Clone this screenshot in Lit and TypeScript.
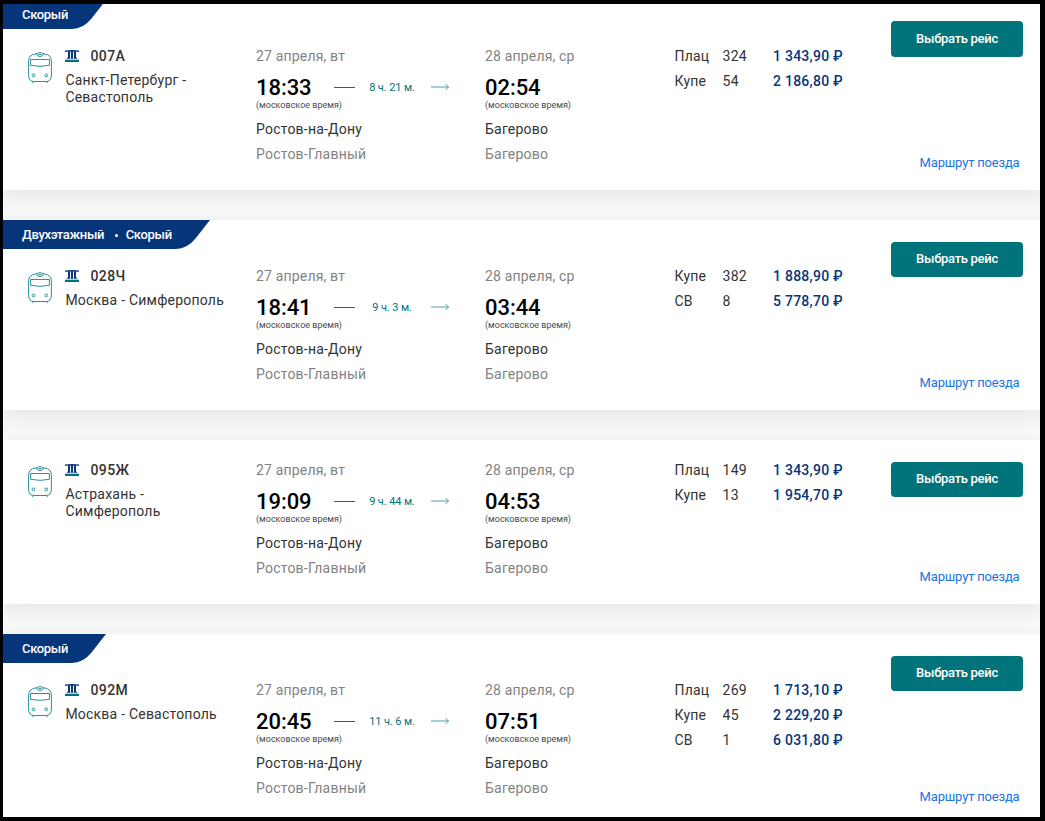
import { LitElement, html, svg, css, nothing } from 'lit';
import { customElement, property } from 'lit/decorators.js';

interface Seat {
  type: string;
  count: number;
  price: string;
}

interface Train {
  tags: string[];
  num: string;
  route: string;
  departure: string;
  arrival: string;
  duration: string;
  seats: Seat[];
}

const trains: Train[] = [
  {
    tags: ['Скорый'],
    num: '007А',
    route: 'Санкт-Петербург - Севастополь',
    departure: '18:33',
    arrival: '02:54',
    duration: '8 ч. 21 м.',
    seats: [
      { type: 'Плац', count: 324, price: '1 343,90 ₽' },
      { type: 'Купе', count: 54, price: '2 186,80 ₽' },
    ],
  },
  {
    tags: ['Двухэтажный', 'Скорый'],
    num: '028Ч',
    route: 'Москва - Симферополь',
    departure: '18:41',
    arrival: '03:44',
    duration: '9 ч. 3 м.',
    seats: [
      { type: 'Купе', count: 382, price: '1 888,90 ₽' },
      { type: 'СВ', count: 8, price: '5 778,70 ₽' },
    ],
  },
  {
    tags: [],
    num: '095Ж',
    route: 'Астрахань - Симферополь',
    departure: '19:09',
    arrival: '04:53',
    duration: '9 ч. 44 м.',
    seats: [
      { type: 'Плац', count: 149, price: '1 343,90 ₽' },
      { type: 'Купе', count: 13, price: '1 954,70 ₽' },
    ],
  },
  {
    tags: ['Скорый'],
    num: '092М',
    route: 'Москва - Севастополь',
    departure: '20:45',
    arrival: '07:51',
    duration: '11 ч. 6 м.',
    seats: [
      { type: 'Плац', count: 269, price: '1 713,10 ₽' },
      { type: 'Купе', count: 45, price: '2 229,20 ₽' },
      { type: 'СВ', count: 1, price: '6 031,80 ₽' },
    ],
  },
];

const trainIcon = html`
  <svg width="24" height="31" viewBox="0 0 24 31" fill="none" stroke="#2a9099" stroke-width="1">
    ${svg`
      <path d="M9 1.7Q4 2 2 4.5Q.6 6.5 .6 10V23Q.6 29.5 6 29.5H18Q23.4 29.5 23.4 23V10Q23.4 6.5 22 4.5Q20 2 15 1.7" />
      <path d="M2.6 7.5H21.4V13.3Q12 15.4 2.6 13.3Z" />
      <path d="M8.5 2.2Q9.5 .7 12 .7T15.5 2.2Q14.5 4.5 12 4.5T8.5 2.2Z" />
      <path d="M10.5 2.5H13.5" />
      <circle cx="5.5" cy="23.4" r="1.4" />
      <circle cx="18.3" cy="23.4" r="1.4" />
      <path d="M5.8 29.3L4.3 31M18.2 29.3L19.7 31" />
    `}
  </svg>
`;

const carrierIcon = html`
  <svg class="carrier" width="14" height="12" viewBox="0 0 14 12">
    ${svg`
      <path fill="#06357a" d="M0 .5Q7-.5 14 .5V1.8H0Z" />
      <path fill="#06357a" d="M3 1.5H5V8H5.4V8.8H1.8V8.2Q3 8 3 7Z" />
      <path fill="#06357a" d="M6 1.5H8V8.8H6Z" />
      <path fill="#06357a" d="M11 1.5H9V8H8.6V8.8H12.2V8.2Q11 8 11 7Z" />
      <path fill="#00747a" d="M0 9.7H14V12H0Z" />
    `}
  </svg>
`;

@customElement('train-card')
export class TrainCard extends LitElement {
  @property({ attribute: false }) train!: Train;

  static styles = [
    css`
      :host {
        display: block;
        background-color: white;
        box-shadow: 0 6px 18px rgba(0, 0, 0, 0.07);
      }
      svg {
        display: block;
        flex: none;
      }
      .card {
        display: flex;
        justify-content: space-between;
        min-height: 164px;
      }
      .card.tagged {
        min-height: 190px;
      }
      .ribbon {
        display: flex;
        height: 29px;
      }
      .tags {
        display: flex;
        align-items: center;
        background-color: #06357a;
        color: white;
        font-size: 13px;
        font-weight: 500;
        letter-spacing: -0.32px;
        padding-left: 19px;
      }
      .dot {
        width: 3px;
        height: 3px;
        border-radius: 50%;
        background-color: white;
        margin: 1px 8px 0 10.5px;
      }
      .body {
        display: grid;
        grid-template-columns: 37px 191px 229px 189.5px 180px;
        padding: 18px 0 0 25px;
      }
      .tagged .body {
        padding-top: 15px;
      }
      .train-icon {
        padding-top: 8px;
      }
      .carrier {
        margin-bottom: 1px;
      }
      .number {
        display: flex;
        align-items: center;
        gap: 11.5px;
        line-height: 25px;
        font-weight: 500;
        letter-spacing: 0.4px;
      }
      .route {
        width: 165px;
        line-height: 17px;
        margin-top: 3px;
        padding-left: 0.4px;
      }
      .date,
      .station {
        color: #828282;
        line-height: 25px;
      }
      .date {
        letter-spacing: 0.17px;
      }
      .time-row {
        display: flex;
        align-items: center;
        height: 24px;
        margin-top: 6px;
      }
      .time {
        width: 78px;
        color: black;
        font-size: 22px;
        font-weight: 500;
        letter-spacing: -0.05px;
      }
      .duration {
        display: flex;
        align-items: center;
        justify-content: space-between;
        width: 115px;
        color: #00747a;
        font-size: 11px;
        letter-spacing: -0.1px;
      }
      .label {
        margin-right: 2px;
      }
      .dash {
        width: 21px;
        height: 1px;
        background-color: #00747a;
      }
      .note {
        color: #4a4a4a;
        font-size: 9px;
        line-height: 12px;
        letter-spacing: 0;
      }
      .city {
        line-height: 25px;
        margin-top: 6px;
      }
      .seat {
        display: grid;
        grid-template-columns: 48px 50.5px auto;
        line-height: 25px;
      }
      .count {
        letter-spacing: 0.3px;
      }
      .price {
        color: #06357a;
        font-weight: 500;
        letter-spacing: 0.25px;
        white-space: nowrap;
      }
      .actions {
        display: flex;
        flex-direction: column;
        justify-content: space-between;
        align-items: flex-end;
        padding: 22px 17px 18px 0;
      }
      .actions button {
        width: 132px;
        height: 35px;
        padding: 0 0 2px;
        border: none;
        border-radius: 4px;
        background-color: #00747a;
        color: white;
        font: 500 13px Roboto, sans-serif;
        letter-spacing: -0.3px;
        cursor: pointer;
      }
      :host(:first-child) .actions {
        padding-top: 21px;
      }
      :host(:first-child) button {
        height: 36px;
      }
      .actions a {
        color: #1a73e0;
        font-size: 13px;
        line-height: 18px;
        letter-spacing: -0.18px;
        margin-right: 3.5px;
        text-decoration: none;
      }
    `,
  ];

  renderRibbon() {
    const { tags } = this.train;
    if (!tags.length) return nothing;
    return html`
      <div class="ribbon">
        <div class="tags">
          ${tags.map((tag, i) => html`${i ? html`<span class="dot"></span>` : nothing}<span>${tag}</span>`)}
        </div>
        <svg width="38" height="29" viewBox="0 0 38 29">
          <path fill="#06357a" d="M0 0H38L23.5 18.5Q15 29 4 29H0Z" />
        </svg>
      </div>
    `;
  }

  renderDuration() {
    return html`
      <div class="duration">
        <span class="dash"></span>
        <span class="label">${this.train.duration}</span>
        <svg width="18" height="8" viewBox="0 0 18 8" fill="none" stroke="#2a9099">
          <path stroke-opacity="0.85" d="M0 4H17.5" />
          <path stroke-opacity="0.85" d="M14.5 1L17.5 4L14.5 7" />
        </svg>
      </div>
    `;
  }

  renderStop(date: string, time: string, city: string, station: string, duration: unknown = nothing) {
    return html`
      <div>
        <div class="date">${date}</div>
        <div class="time-row"><span class="time">${time}</span>${duration}</div>
        <div class="note">(московское время)</div>
        <div class="city">${city}</div>
        <div class="station">${station}</div>
      </div>
    `;
  }

  render() {
    const t = this.train;
    return html`
      <div class="card ${t.tags.length ? 'tagged' : ''}">
        <div>
          ${this.renderRibbon()}
          <div class="body">
            <div class="train-icon">${trainIcon}</div>
            <div>
              <div class="number">${carrierIcon}<span>${t.num}</span></div>
              <div class="route">${t.route}</div>
            </div>
            ${this.renderStop('27 апреля, вт', t.departure, 'Ростов-на-Дону', 'Ростов-Главный', this.renderDuration())}
            ${this.renderStop('28 апреля, ср', t.arrival, 'Багерово', 'Багерово')}
            <div>
              ${t.seats.map(
                (s) => html`
                  <div class="seat">
                    <span>${s.type}</span>
                    <span class="count">${s.count}</span>
                    <span class="price">${s.price}</span>
                  </div>
                `
              )}
            </div>
          </div>
        </div>
        <div class="actions">
          <button>Выбрать рейс</button>
          <a href="#">Маршрут поезда</a>
        </div>
      </div>
    `;
  }
}

@customElement('app-root')
export class AppRoot extends LitElement {
  static styles = [
    css`
      :host {
        display: block;
        box-sizing: border-box;
        height: 821px;
        border: solid black;
        border-width: 4px 5px 4px 3px;
        overflow: hidden;
        background-color: #f7f7f7;
        color: #333;
        font-family: Roboto, sans-serif;
        font-size: 14px;
        letter-spacing: 0.22px;
      }
      .list {
        display: flex;
        flex-direction: column;
        gap: 30px;
        margin-top: -4px;
      }
    `,
  ];

  render() {
    return html`
      <div class="list">
        ${trains.map((train) => html`<train-card .train=${train}></train-card>`)}
      </div>
    `;
  }
}
